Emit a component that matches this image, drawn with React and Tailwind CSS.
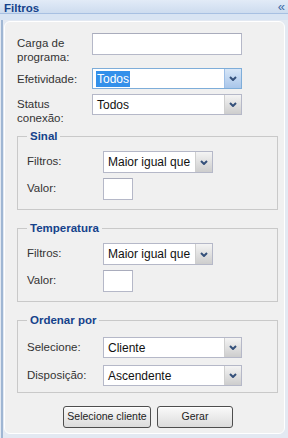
import React from 'react';

const Chevron = ({ color = '#34507a' }) => (
  <svg width="8" height="5" viewBox="0 0 8 5">
    <path d="M1 1 L4 4 L7 1" fill="none" stroke={color} strokeWidth="2" />
  </svg>
);

const Combo = ({ value, width, height = 'h-[21px]', focused, selected }) => (
  <div
    className={`flex ${width} ${height} border bg-white ${
      focused ? 'border-[#7eadd9]' : 'border-[#b5b8c8]'
    }`}
  >
    <div className="flex-1 flex items-center pl-[3px] text-[12px] text-[#111] overflow-hidden whitespace-nowrap">
      <span className={selected ? 'bg-[#3390ea] text-white px-[1px] leading-[16px]' : 'px-[1px]'}>{value}</span>
    </div>
    <div
      className={`w-[17px] shrink-0 flex items-center justify-center border-l ${
        focused
          ? 'border-[#9ebfe6] bg-gradient-to-b from-[#d7e6f7] to-[#a9c6ea]'
          : 'border-[#cfcfcf] bg-gradient-to-b from-[#f4f4f4] to-[#cdcdcd]'
      }`}
    >
      <Chevron />
    </div>
  </div>
);

const TextBox = ({ width, height = 'h-[22px]' }) => (
  <div className={`${width} ${height} border border-[#b5b8c8] border-t-[#a9acbc] bg-white`} />
);

const Group = ({ title, className, children }) => (
  <fieldset className={`ml-[12px] w-[261px] border border-[#c9c9c9] pl-[9px] ${className}`}>
    <legend className="px-[3px] text-[11.5px] leading-[14px] font-bold text-[#15428b]">{title}</legend>
    {children}
  </fieldset>
);

const Row = ({ label, className, children }) => (
  <div className={`flex items-center ${className}`}>
    <div className="w-[76px] text-[11.5px] text-[#333]">{label}</div>
    {children}
  </div>
);

const Button = ({ children, width }) => (
  <button
    className={`${width} h-[22px] rounded-[3px] border border-[#4e4e4e] bg-gradient-to-b from-[#fafafa] to-[#dcdcdc] text-[10.5px] text-[#222] shadow-[inset_0_1px_0_#ffffff]`}
  >
    {children}
  </button>
);

export default function App() {
  return (
    <div className="w-[288px] h-[438px] flex flex-col bg-[#e3e9f2] overflow-hidden font-['Liberation_Sans',Arial,sans-serif]">
      <div className="h-[14px] flex justify-between pl-[4px] pr-[3px] bg-gradient-to-b from-[#e2ebf7] to-[#cddcef] border-b border-[#a7c0e2]">
        <span className="pt-[2px] text-[11.5px] leading-[12px] font-bold text-[#15428b]">Filtros</span>
        <span className="pt-[1px] text-[13px] leading-[12px] text-[#3d6aa5]">«</span>
      </div>
      <div className="h-[6px] bg-[#d8e4f3]" />
      <div className="flex-1 flex ml-[1px] border-l-2 border-[#9fb6d3] pb-[4px] pr-[3px] pt-[1px]">
        <div className="flex-1 ml-[1px] rounded-[6px] border border-white bg-[#f0f0f0] pt-[11px]">
          <div className="h-[35px] flex items-start pl-[12px]">
            <div className="w-[75px] pt-[3px] text-[11.5px] leading-[14px] text-[#333]">
              Carga de<br />programa:
            </div>
            <TextBox width="w-[150px]" />
          </div>
          <div className="h-[26px] flex items-start pl-[12px]">
            <div className="w-[75px] pt-[4px] text-[11.5px] leading-[14px] text-[#333]">Efetividade:</div>
            <Combo value="Todos" width="w-[150px]" focused selected />
          </div>
          <div className="h-[35px] flex items-start pl-[12px]">
            <div className="w-[75px] pt-[3px] text-[11.5px] leading-[14px] text-[#333]">
              Status<br />conexão:
            </div>
            <Combo value="Todos" width="w-[150px]" />
          </div>

          <Group title="Sinal" className="pt-[8px] pb-[9px]">
            <Row label="Filtros:">
              <Combo value="Maior igual que" width="w-[110px]" height="h-[22px]" />
            </Row>
            <Row label="Valor:" className="mt-[5px]">
              <TextBox width="w-[30px]" />
            </Row>
          </Group>

          <Group title="Temperatura" className="mt-[11px] pt-[8px] pb-[9px]">
            <Row label="Filtros:">
              <Combo value="Maior igual que" width="w-[110px]" height="h-[22px]" />
            </Row>
            <Row label="Valor:" className="mt-[5px]">
              <TextBox width="w-[30px]" />
            </Row>
          </Group>

          <Group title="Ordenar por" className="mt-[11px] pt-[10px] pb-[6px]">
            <Row label="Selecione:">
              <Combo value="Cliente" width="w-[139px]" />
            </Row>
            <Row label="Disposição:" className="mt-[7px]">
              <Combo value="Ascendente" width="w-[139px]" />
            </Row>
          </Group>

          <div className="flex gap-[6px] pl-[58px] mt-[13px]">
            <Button width="w-[88px]">Selecione cliente</Button>
            <Button width="w-[76px]">Gerar</Button>
          </div>
        </div>
      </div>
    </div>
  );
}
